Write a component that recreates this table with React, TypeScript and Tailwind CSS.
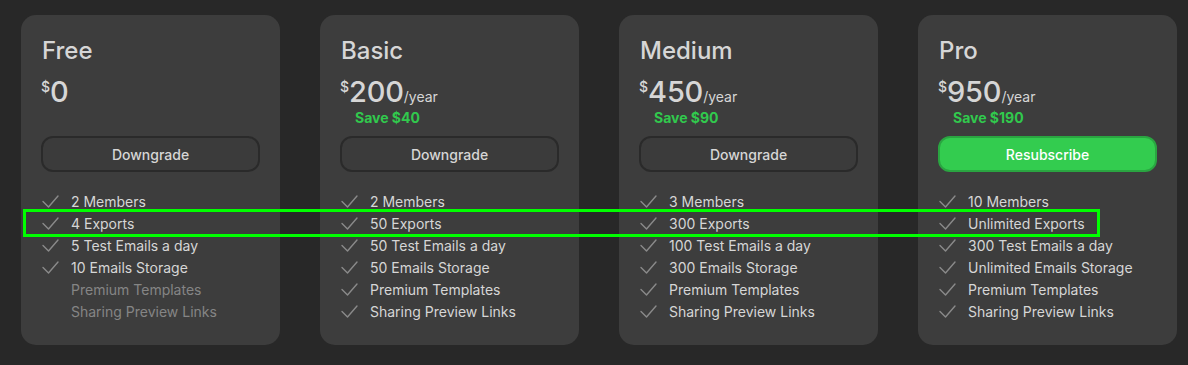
type Plan = {
  name: string
  price: string
  perYear: boolean
  save?: string
  action: string
  primary?: boolean
  features: { label: string; included: boolean }[]
}

const plans: Plan[] = [
  {
    name: 'Free',
    price: '0',
    perYear: false,
    action: 'Downgrade',
    features: [
      { label: '2 Members', included: true },
      { label: '4 Exports', included: true },
      { label: '5 Test Emails a day', included: true },
      { label: '10 Emails Storage', included: true },
      { label: 'Premium Templates', included: false },
      { label: 'Sharing Preview Links', included: false },
    ],
  },
  {
    name: 'Basic',
    price: '200',
    perYear: true,
    save: 'Save $40',
    action: 'Downgrade',
    features: [
      { label: '2 Members', included: true },
      { label: '50 Exports', included: true },
      { label: '50 Test Emails a day', included: true },
      { label: '50 Emails Storage', included: true },
      { label: 'Premium Templates', included: true },
      { label: 'Sharing Preview Links', included: true },
    ],
  },
  {
    name: 'Medium',
    price: '450',
    perYear: true,
    save: 'Save $90',
    action: 'Downgrade',
    features: [
      { label: '3 Members', included: true },
      { label: '300 Exports', included: true },
      { label: '100 Test Emails a day', included: true },
      { label: '300 Emails Storage', included: true },
      { label: 'Premium Templates', included: true },
      { label: 'Sharing Preview Links', included: true },
    ],
  },
  {
    name: 'Pro',
    price: '950',
    perYear: true,
    save: 'Save $190',
    action: 'Resubscribe',
    primary: true,
    features: [
      { label: '10 Members', included: true },
      { label: 'Unlimited Exports', included: true },
      { label: '300 Test Emails a day', included: true },
      { label: 'Unlimited Emails Storage', included: true },
      { label: 'Premium Templates', included: true },
      { label: 'Sharing Preview Links', included: true },
    ],
  },
]

function Check() {
  return (
    <svg width="18" height="18" viewBox="0 0 18 18" fill="none" className="shrink-0">
      <path d="M2 9.5 L7.5 15 L17 4" stroke="#8a8a8a" strokeWidth="1.4" strokeLinecap="round" strokeLinejoin="round" />
    </svg>
  )
}

function PlanCard({ plan }: { plan: Plan }) {
  return (
    <div className="w-[259px] shrink-0 rounded-[15px] bg-[#3d3d3d] px-[20px] pt-[20px] pb-[23px]">
      <h2 className="text-[24px] leading-[32px] font-medium text-[#d6d6d6] pl-[1px]">{plan.name}</h2>

      {/* price + savings, fixed height so buttons line up */}
      <div className="mt-[7px] h-[62px]">
        <div className="flex items-start leading-[36px] text-[#d6d6d6]">
          <span className="text-[14px] leading-[20px] mt-[3px] font-medium">$</span>
          <span className="text-[29px] font-medium tracking-[-0.2px]">{plan.price}</span>
          {plan.perYear && <span className="text-[14px] mt-[5px] self-start">/year</span>}
        </div>
        {plan.save && (
          <div className="-mt-[6px] pl-[15px] text-[14px] leading-[18px] font-bold text-[#31c94d]">{plan.save}</div>
        )}
      </div>

      <button
        className={
          plan.primary
            ? 'w-full h-[36px] rounded-[12px] border-2 border-[#2aa541] bg-[#33cc4f] text-[14px] font-medium text-white'
            : 'w-full h-[36px] rounded-[12px] border-2 border-[#2a2a2a] bg-[#3b3b3b] text-[14px] font-medium text-[#d6d6d6]'
        }
      >
        {plan.action}
      </button>

      <ul className="mt-[18px] flex flex-col">
        {plan.features.map(f => (
          <li key={f.label} className="flex items-center gap-[12px] h-[22px] text-[14px]">
            {f.included ? <Check /> : <span className="w-[18px] shrink-0" />}
            <span className={f.included ? 'text-[#d6d6d6]' : 'text-[#858585]'}>{f.label}</span>
          </li>
        ))}
      </ul>
    </div>
  )
}

export default function App() {
  return (
    <div className="relative h-[365px] w-[1188px] overflow-hidden bg-[#282828] font-['Inter',sans-serif] antialiased">
      <div className="flex gap-[40px] pl-[21px] pt-[15px]">
        {plans.map(p => (
          <PlanCard key={p.name} plan={p} />
        ))}
      </div>

      {/* highlight annotation */}
      <div className="pointer-events-none absolute left-[23px] top-[209px] h-[28px] w-[1077px] border-[3px] border-[#0f0]" />
    </div>
  )
}
